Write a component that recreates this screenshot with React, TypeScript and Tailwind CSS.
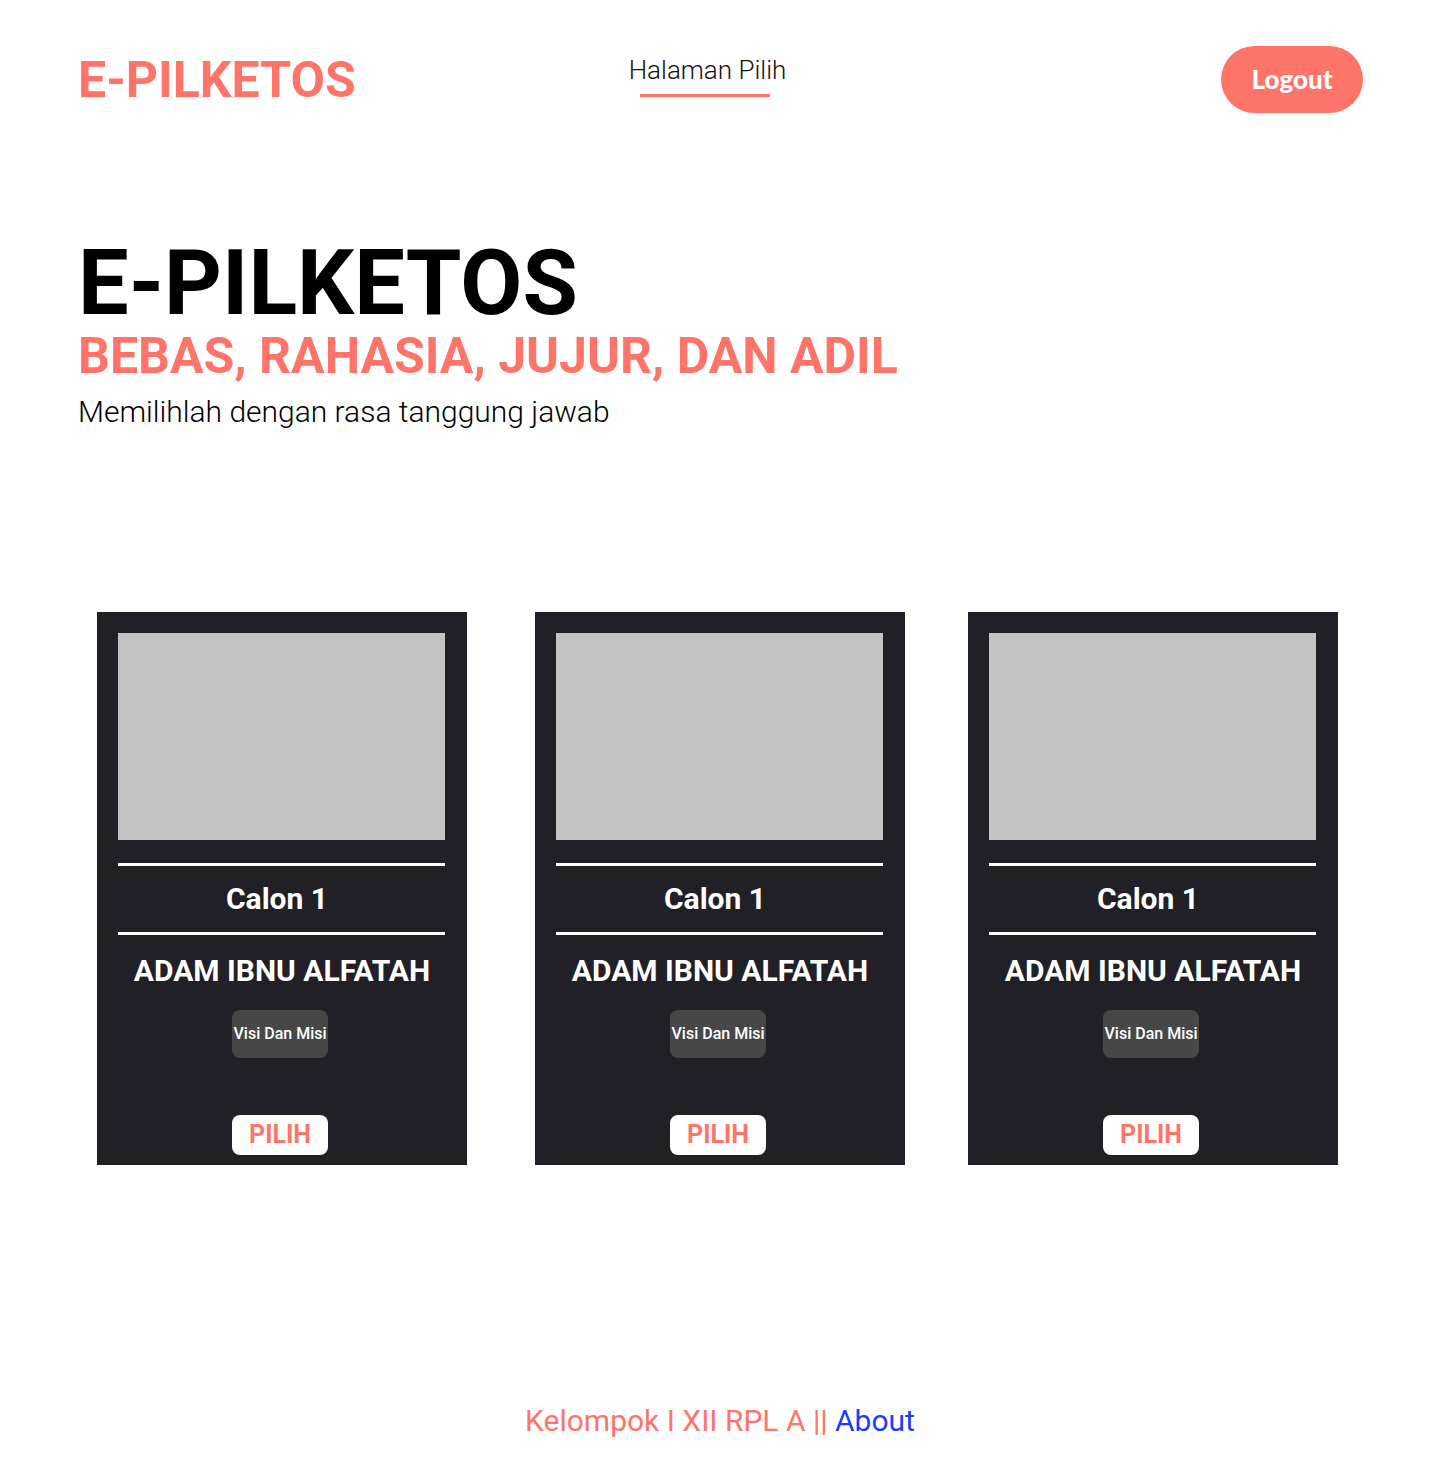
import React from "react";

const coral = "text-[#ff7468]";

function Card({ className }: { className?: string }) {
  return (
    <div className={`w-[370px] h-[553px] bg-[#202026] flex flex-col items-center pt-[21px] shrink-0 ${className ?? ""}`}>
      <div className="w-[327px] h-[207px] bg-[#c4c4c4] ml-[-1px]" />
      <div className="w-[327px] h-[3px] bg-white mt-[23px] ml-[-1px]" />
      <div className="h-[66px] flex items-center justify-center text-white font-bold text-[30px] leading-none pr-[10px]">
        Calon 1
      </div>
      <div className="w-[327px] h-[3px] bg-white ml-[-1px]" />
      <div className="mt-[21px] text-white font-bold text-[30px] leading-none">ADAM IBNU ALFATAH</div>
      <button className="mt-[24px] w-[96px] h-[48px] rounded-[8px] bg-[#474747] text-white text-[16px] font-medium flex items-center justify-center mr-[4px]">
        Visi Dan Misi
      </button>
      <button className={`mt-[57px] w-[96px] h-[40px] rounded-[8px] bg-white ${coral} text-[25px] font-bold flex items-center justify-center mr-[4px]`}>
        PILIH
      </button>
    </div>
  );
}

export default function App() {
  return (
    <div className="w-[1440px] min-h-[1478px] bg-white flex flex-col" style={{ fontFamily: "Roboto, 'Liberation Sans', sans-serif" }}>
      <header className="flex items-start pl-[78px] pr-[77px] pt-[46px]">
        <div className={`${coral} font-bold text-[50px] leading-none mt-[9px]`}>E-PILKETOS</div>
        <div className="flex flex-col items-center mt-[11px] ml-[273px]">
          <span className="text-[26px] font-light text-[#111] leading-none">Halaman Pilih</span>
          <span className="mt-[11px] w-[130px] h-[3px] bg-[#ff7468] mr-[4px]" />
        </div>
        <button
          className="ml-auto w-[142px] h-[67px] rounded-full bg-[#ff7468] text-white text-[26px] font-bold flex items-center justify-center"
          style={{ fontFamily: "Lato, 'Open Sans', sans-serif", fontWeight: 900 }}
        >
          Logout
        </button>
      </header>

      <section className="pl-[78px] mt-[126px]">
        <h1 className="text-[90px] font-bold leading-none text-black">E-PILKETOS</h1>
        <h2 className={`${coral} text-[50px] font-bold leading-none mt-[2px]`}>BEBAS, RAHASIA, JUJUR, DAN ADIL</h2>
        <p className="text-[30px] font-light text-black leading-none mt-[16px]">Memilihlah dengan rasa tanggung jawab</p>
      </section>

      <section className="flex pl-[97px] mt-[185px]">
        <Card />
        <Card className="ml-[68px]" />
        <Card className="ml-[63px]" />
      </section>

      <footer className="mt-[241px] text-center text-[30px] leading-none">
        <span className={coral}>Kelompok I XII RPL A || </span>
        <a className="text-[#1a3cff]">About</a>
      </footer>
    </div>
  );
}
